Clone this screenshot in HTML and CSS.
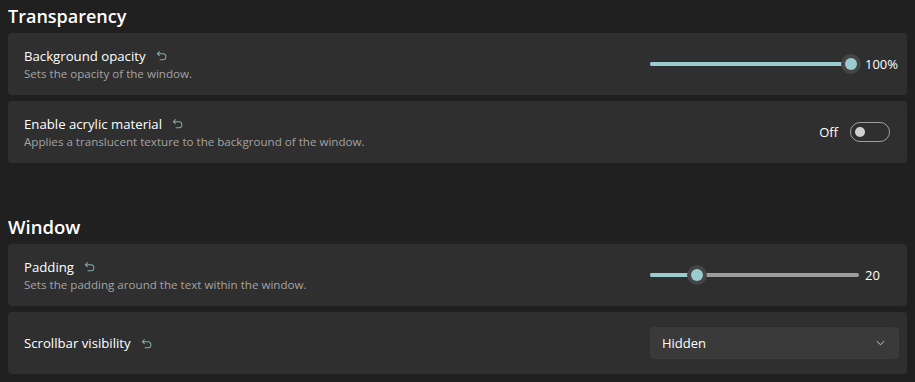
FILE: index.html
```html
<!DOCTYPE html>
<html lang="en">
<head>
  <meta charset="UTF-8" />
  <title>Settings - Appearance</title>
  <link rel="stylesheet" href="styles.css">
</head>
<body>
  <h2 class="group-title">Transparency</h2>

  <div class="card">
    <div class="card-text">
      <div class="card-title">Background opacity <svg class="reset" viewBox="0 0 12 12"><path d="M4 1.5 L1.5 4 L4 6.5 M1.5 4 H7.5 A3.3 3.3 0 0 1 7.5 10.6 H4"/></svg></div>
      <div class="card-desc">Sets the opacity of the window.</div>
    </div>
    <div class="control">
      <div class="slider">
        <div class="rail"></div>
        <div class="fill" style="width: 100%"></div>
        <div class="thumb-range"><div class="thumb" style="left: 100%"></div></div>
      </div>
      <span class="slider-value">100%</span>
    </div>
  </div>

  <div class="card">
    <div class="card-text">
      <div class="card-title">Enable acrylic material <svg class="reset" viewBox="0 0 12 12"><path d="M4 1.5 L1.5 4 L4 6.5 M1.5 4 H7.5 A3.3 3.3 0 0 1 7.5 10.6 H4"/></svg></div>
      <div class="card-desc">Applies a translucent texture to the background of the window.</div>
    </div>
    <div class="control control-end">
      <span class="toggle-label">Off</span>
      <span class="toggle"><span class="knob"></span></span>
    </div>
  </div>

  <h2 class="group-title second">Window</h2>

  <div class="card">
    <div class="card-text">
      <div class="card-title">Padding <svg class="reset" viewBox="0 0 12 12"><path d="M4 1.5 L1.5 4 L4 6.5 M1.5 4 H7.5 A3.3 3.3 0 0 1 7.5 10.6 H4"/></svg></div>
      <div class="card-desc">Sets the padding around the text within the window.</div>
    </div>
    <div class="control">
      <div class="slider">
        <div class="rail"></div>
        <div class="fill" style="width: 22%"></div>
        <div class="thumb-range"><div class="thumb" style="left: 20%"></div></div>
      </div>
      <span class="slider-value">20</span>
    </div>
  </div>

  <div class="card">
    <div class="card-text">
      <div class="card-title">Scrollbar visibility <svg class="reset" viewBox="0 0 12 12"><path d="M4 1.5 L1.5 4 L4 6.5 M1.5 4 H7.5 A3.3 3.3 0 0 1 7.5 10.6 H4"/></svg></div>
    </div>
    <div class="control">
      <div class="combo">
        <span>Hidden</span>
        <svg class="chevron" viewBox="0 0 10 6"><path d="M1 1 L5 5 L9 1"/></svg>
      </div>
    </div>
  </div>
</body>
</html>
```

FILE: styles.css
```css
:root {
  --bg: #202020;
  --card: #2f2f2f;
  --accent: #99cbcf;
  --text: #ffffff;
  --muted: #a3a3a3;
}

body {
  margin: 0;
  padding: 0 8px;
  background: var(--bg);
  color: var(--text);
  font-family: 'Segoe UI', 'Open Sans', 'Noto Sans', sans-serif;
  overflow: hidden;
}

.group-title {
  margin: 0;
  padding-top: 3px;
  height: 30px;
  font-size: 18px;
  font-weight: 600;
  line-height: 26px;
}

.group-title.second {
  margin-top: 37px;
  padding-top: 14px;
  box-sizing: border-box;
  height: 44px;
  font-size: 18.5px;
}

.card {
  display: flex;
  align-items: center;
  height: 62px;
  margin-bottom: 6px;
  padding: 0 8px 0 16px;
  background: var(--card);
  border-radius: 4px;
  box-sizing: border-box;
}

.card-text {
  flex: 1;
}

.card-title {
  font-size: 13.2px;
  line-height: 18px;
  display: flex;
  align-items: center;
}

.reset {
  width: 11px;
  height: 11px;
  margin-left: 10px;
  fill: none;
  stroke: #86aaaa;
  stroke-width: 1.1;
}

.card-desc {
  margin-top: 1px;
  font-size: 11.6px;
  line-height: 16px;
  color: var(--muted);
}

.control {
  width: 249px;
  display: flex;
  align-items: center;
}

.control-end {
  justify-content: flex-end;
  padding-right: 9px;
  box-sizing: border-box;
}

/* slider */
.slider {
  position: relative;
  width: 209px;
  height: 20px;
}

.rail {
  position: absolute;
  left: 0;
  right: 0;
  top: 8px;
  height: 4px;
  border-radius: 2px;
  background: #9e9e9e;
}

.fill {
  position: absolute;
  left: 0;
  top: 8px;
  height: 4px;
  border-radius: 2px;
  background: var(--accent);
}

.thumb-range {
  position: absolute;
  left: 8px;
  right: 8px;
  top: 0;
  height: 20px;
}

.thumb {
  position: absolute;
  top: 0;
  width: 20px;
  height: 20px;
  margin-left: -10px;
  border-radius: 50%;
  background: #454545;
}

.thumb::after {
  content: '';
  position: absolute;
  left: 4px;
  top: 4px;
  width: 12px;
  height: 12px;
  border-radius: 50%;
  background: var(--accent);
}

.slider-value {
  margin-left: 6px;
  font-size: 13px;
}

/* toggle */
.toggle-label {
  font-size: 13px;
  margin-right: 12px;
}

.toggle {
  position: relative;
  width: 40px;
  height: 20px;
  border: 1px solid #a0a0a0;
  border-radius: 10px;
  box-sizing: border-box;
}

.knob {
  position: absolute;
  left: 4px;
  top: 4px;
  width: 10px;
  height: 10px;
  border-radius: 50%;
  background: #d0d0d0;
}

/* combo box */
.combo {
  width: 249px;
  height: 32px;
  display: flex;
  align-items: center;
  justify-content: space-between;
  padding: 0 14px 0 12px;
  box-sizing: border-box;
  background: #3a3a3a;
  border-radius: 4px;
  font-size: 13px;
}

.chevron {
  width: 9px;
  height: 6px;
  fill: none;
  stroke: #cfcfcf;
  stroke-width: 1.1;
}
```
